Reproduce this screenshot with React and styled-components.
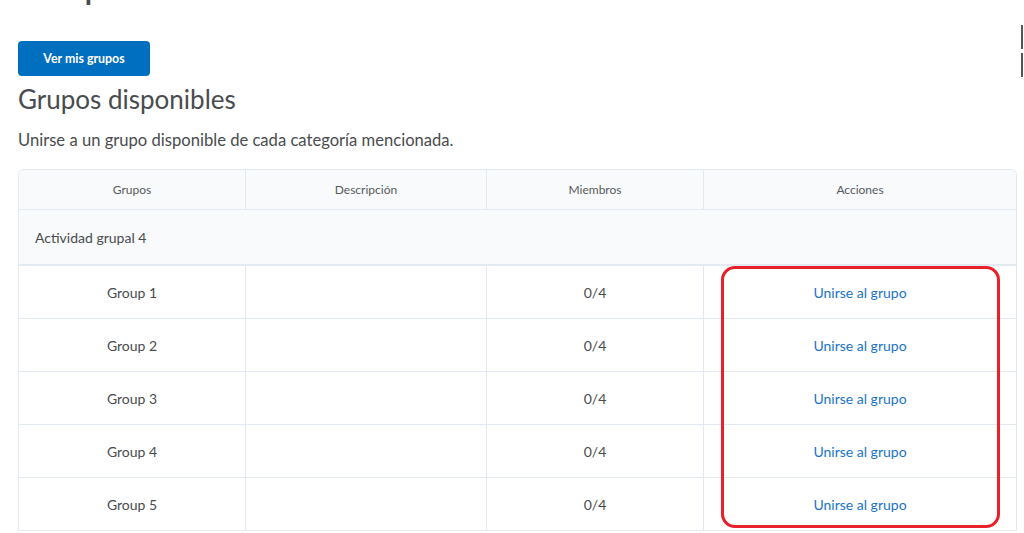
import React from "react";
import styled, { createGlobalStyle } from "styled-components";

const GlobalStyle = createGlobalStyle`
  body {
    margin: 0;
    background: #ffffff;
    font-family: Lato, "Open Sans", sans-serif;
    color: #494c4e;
    overflow: hidden;
  }
`;

const Page = styled.div`
  position: relative;
  width: 1024px;
  height: 533px;
  padding: 0 7px 0 18px;
  box-sizing: border-box;
  overflow: hidden;
`;

const PageTitle = styled.h1`
  margin: -41px 0 0 0;
  font-size: 40px;
  line-height: 48px;
  font-weight: 400;
  color: #494c4e;
`;

const PrimaryButton = styled.button`
  display: block;
  margin-top: 34px;
  width: 132px;
  height: 35px;
  border: none;
  border-radius: 4px;
  background: #006fbf;
  color: #ffffff;
  font-family: Lato, sans-serif;
  font-size: 12.4px;
  font-weight: 700;
  cursor: pointer;
`;

const SectionTitle = styled.h2`
  margin: 8px 0 0 0;
  font-size: 26px;
  line-height: 30px;
  font-weight: 400;
  color: #494c4e;
`;

const Intro = styled.p`
  margin: 16px 0 0 0;
  font-size: 16.6px;
  line-height: 20px;
  color: #494c4e;
`;

const Table = styled.div`
  margin-top: 19px;
  width: 999px;
  box-sizing: border-box;
  border: 1px solid #e3e9f1;
  border-bottom: none;
  border-radius: 6px 6px 0 0;
  overflow: hidden;
`;

const Row = styled.div`
  display: grid;
  grid-template-columns: 227px 241px 217px 1fr;
  height: ${(p) => p.h}px;
  background: ${(p) => (p.shaded ? "#f9fafc" : "#ffffff")};
  border-bottom: 1px solid #e3e9f1;
  box-sizing: border-box;
`;

const HeadCell = styled.div`
  display: flex;
  align-items: center;
  justify-content: center;
  font-size: 12px;
  color: #565a5c;
  border-right: 1px solid #e3e9f1;
  &:last-child {
    border-right: none;
  }
`;

const CategoryRow = styled.div`
  display: flex;
  align-items: center;
  height: 54px;
  padding-left: 16px;
  background: #f9fafc;
  border-bottom: 2px solid #e3e9f1;
  box-sizing: content-box;
  font-size: 14px;
  color: #494c4e;
`;

const Cell = styled.div`
  display: flex;
  align-items: center;
  justify-content: center;
  font-size: 14px;
  color: #494c4e;
  border-right: 1px solid #e3e9f1;
  &:last-child {
    border-right: none;
  }
`;

const JoinLink = styled.a`
  color: #1a73c8;
  font-size: 14px;
  text-decoration: none;
  cursor: pointer;
`;

const Highlight = styled.div`
  position: absolute;
  left: 721px;
  top: 266px;
  width: 279px;
  height: 262px;
  border: 3px solid #e8202a;
  border-radius: 14px;
  box-sizing: border-box;
  pointer-events: none;
`;

const EdgeMark = styled.div`
  position: absolute;
  right: 1px;
  top: ${(p) => p.top}px;
  width: 2px;
  height: 24px;
  background: #555555;
`;

const groups = ["Group 1", "Group 2", "Group 3", "Group 4", "Group 5"];

const App = () => {
  return (
    <Page>
      <GlobalStyle />
      <PageTitle>Grupos</PageTitle>
      <PrimaryButton type="button">Ver mis grupos</PrimaryButton>
      <SectionTitle>Grupos disponibles</SectionTitle>
      <Intro>Unirse a un grupo disponible de cada categoría mencionada.</Intro>
      <Table>
        <Row h={40} shaded>
          <HeadCell>Grupos</HeadCell>
          <HeadCell>Descripción</HeadCell>
          <HeadCell>Miembros</HeadCell>
          <HeadCell>Acciones</HeadCell>
        </Row>
        <CategoryRow>Actividad grupal 4</CategoryRow>
        {groups.map((g) => (
          <Row h={53} key={g}>
            <Cell>{g}</Cell>
            <Cell />
            <Cell>0/4</Cell>
            <Cell>
              <JoinLink>Unirse al grupo</JoinLink>
            </Cell>
          </Row>
        ))}
      </Table>
      <Highlight />
      <EdgeMark top={25} />
      <EdgeMark top={53} />
    </Page>
  );
};

export default App;
